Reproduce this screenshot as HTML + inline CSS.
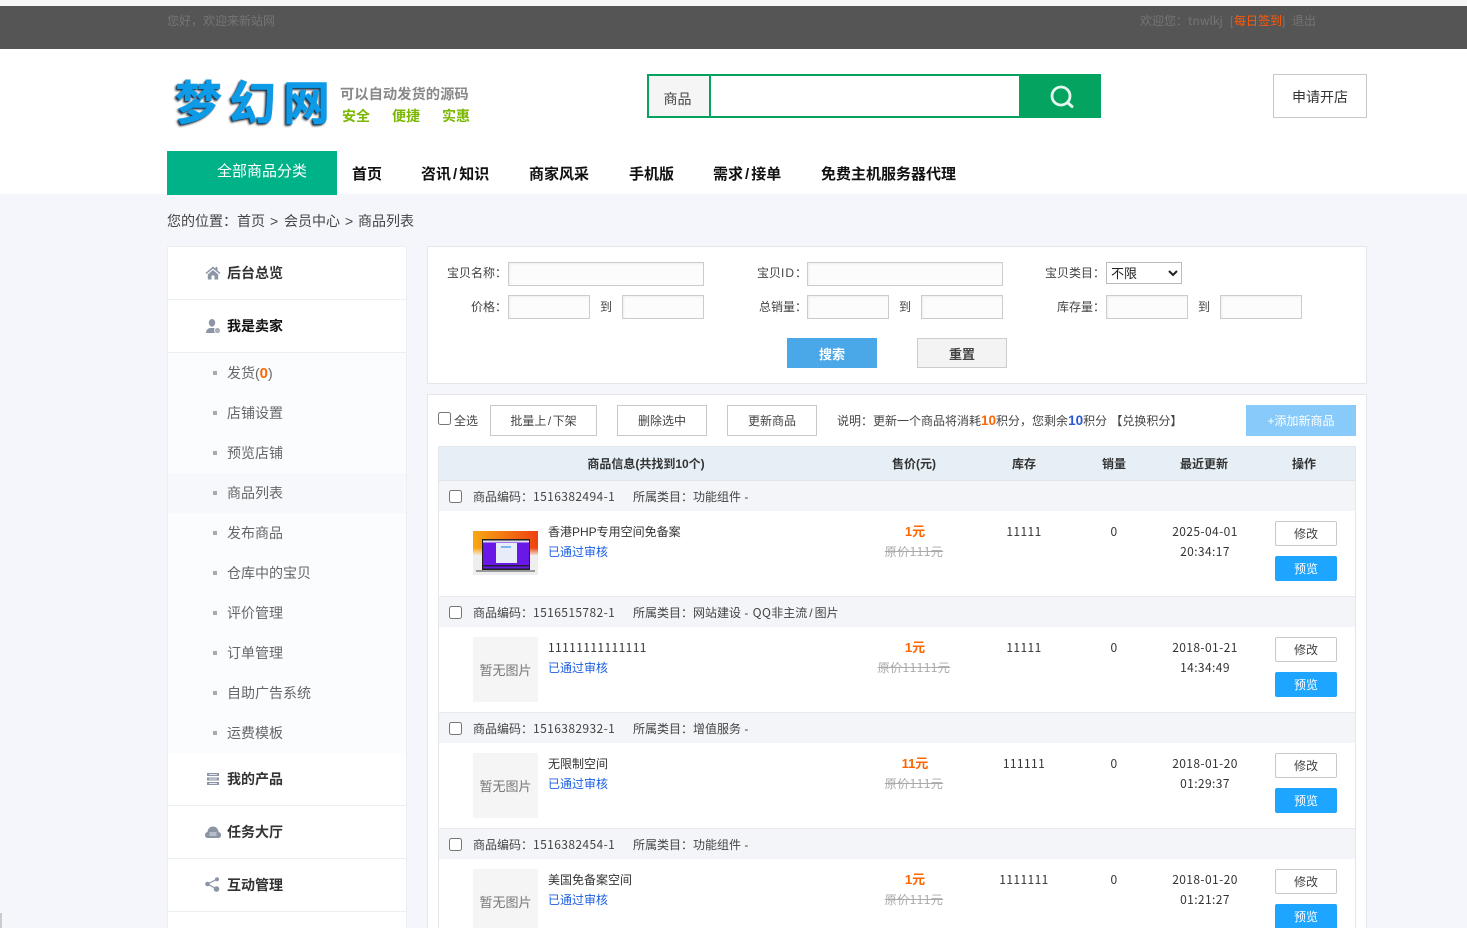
<!DOCTYPE html>
<html lang="zh-CN"><head><meta charset="utf-8"><title>商品列表</title>
<style>
*{box-sizing:border-box}
html,body{margin:0;padding:0;width:1467px;height:928px;overflow:hidden;background:#f4f6fb;font-family:"Liberation Sans","Noto Sans CJK SC",sans-serif;font-size:12px;color:#333}
#w{position:relative;width:1467px;height:928px;overflow:hidden}
.a{position:absolute}
.t{position:absolute;white-space:nowrap;line-height:20px}
.c{text-align:center}
.n{font-family:"Noto Sans CJK SC","Liberation Sans",sans-serif;letter-spacing:.4px;font-kerning:none}
.b{font-weight:bold}
.sl{margin:0 2px}
input.i{position:absolute;height:24px;border:1px solid #ccc;background:#fcfcfd;box-shadow:inset 1px 1px 2px #eee;margin:0;padding:0}
.btn{position:absolute;border:1px solid #c8c8c8;background:#fff;text-align:center;line-height:31px;height:31px;color:#444}
.side{font-size:14px;font-weight:bold;left:227px;color:#333}
.sub{font-size:14px;left:227px;color:#666}
.dot{position:absolute;left:213px;width:4px;height:4px;background:#a5a9b0}
.rh{position:absolute;left:439px;width:916px;height:30px;background:#f3f5f9}
.ln{position:absolute;left:439px;width:916px;height:2px;background:#e8eaee}
.cb{position:absolute;left:449px;width:13px;height:13px;border:1px solid #767676;border-radius:2.5px;background:#fff}
.noimg{position:absolute;left:473px;width:65px;height:65px;background:#f5f5f5;color:#777;font-size:13px;text-align:center;line-height:67px}
.mod{position:absolute;left:1275px;width:62px;height:25px;border:1px solid #c8c8c8;border-radius:2px;text-align:center;line-height:25px;background:#fff;color:#444}
.pre{position:absolute;left:1275px;width:62px;height:25px;border-radius:2px;text-align:center;line-height:27px;background:#1ea5ff;color:#fff}
.ok{color:#1c5fe0}
.pr{color:#f60;font-weight:bold;font-size:13px}
.old{color:#aaa;text-decoration:line-through}
.lb{color:#444}
</style></head><body><div id="w">

<div class="a" style="left:0;top:0;width:1467px;height:6px;background:#f6f6f6"></div>
<div class="a" style="left:0;top:6px;width:1467px;height:43px;background:#555"></div>
<div class="t" style="left:167px;top:11px;color:#757575">您好，欢迎来新站网</div>
<div class="t" style="left:1140px;top:11px;color:#757575">欢迎您：</div>
<div class="t n" style="left:1188px;top:11px;color:#757575;letter-spacing:0">tnwlkj</div>
<div class="t" style="left:1230px;top:11px;color:#757575">[</div>
<div class="t" style="left:1234px;top:11px;color:#ff5a0a">每日签到</div>
<div class="t" style="left:1282px;top:11px;color:#757575">]</div>
<div class="t" style="left:1292px;top:11px;color:#757575">退出</div>

<div class="a" style="left:0;top:49px;width:1467px;height:145px;background:#fff"></div>

<div class="t b" style="left:175px;top:100px;height:0;line-height:0;font-size:47px;letter-spacing:7px;color:#0d9ae6;-webkit-text-stroke:.5px #0d9ae6;text-shadow:-1px 1px 1px #123a60,-2px 2px 2px #333;font-family:'Noto Sans CJK SC',sans-serif">梦幻网</div>
<div class="t b" style="left:340px;top:85px;font-size:14.3px;color:#888">可以自动发货的源码</div>
<div class="t b" style="left:342px;top:106px;font-size:14px;color:#7ab800">安全</div>
<div class="t b" style="left:392px;top:106px;font-size:14px;color:#7ab800">便捷</div>
<div class="t b" style="left:442px;top:106px;font-size:14px;color:#7ab800">实惠</div>

<div class="a" style="left:647px;top:74px;width:454px;height:44px;border:2px solid #04a35f;background:#fff"></div>
<div class="a c" style="left:649px;top:76px;width:62px;height:40px;background:#f5f5f5;border-right:2px solid #04a35f;font-size:14px;line-height:46px;color:#444;padding-right:3px">商品</div>
<div class="a" style="left:1019px;top:74px;width:82px;height:44px;background:#04a35f"></div>
<svg class="a" style="left:1049px;top:84px" width="26" height="26" viewBox="0 0 26 26"><circle cx="12" cy="12" r="9" fill="none" stroke="#e6f7ef" stroke-width="2.8"/><path d="M18.500 18.500L23 22.500" stroke="#e6f7ef" stroke-width="3" stroke-linecap="round"/></svg>
<div class="a c" style="left:1273px;top:74px;width:94px;height:44px;border:1px solid #c8c8c8;font-size:14px;line-height:44px;color:#333">申请开店</div>

<div class="a" style="left:167px;top:151px;width:170px;height:44px;background:#00b288"></div>
<div class="t" style="left:217px;top:163px;font-size:15px;line-height:18px;color:#fff">全部商品分类</div>
<div class="t b" style="left:352px;top:165px;font-size:15px;color:#111">首页</div>
<div class="t b" style="left:421px;top:165px;font-size:15px;color:#111">咨讯<span class="sl">/</span>知识</div>
<div class="t b" style="left:529px;top:165px;font-size:15px;color:#111">商家风采</div>
<div class="t b" style="left:629px;top:165px;font-size:15px;color:#111">手机版</div>
<div class="t b" style="left:713px;top:165px;font-size:15px;color:#111">需求<span class="sl">/</span>接单</div>
<div class="t b" style="left:821px;top:165px;font-size:15px;color:#111">免费主机服务器代理</div>

<div class="t" style="left:167px;top:211px;font-size:14px;color:#444">您的位置：</div>
<div class="t" style="left:237px;top:211px;font-size:14px;color:#444">首页</div>
<div class="t" style="left:270px;top:211px;font-size:14px;color:#444">&gt;</div>
<div class="t" style="left:284px;top:211px;font-size:14px;color:#444">会员中心</div>
<div class="t" style="left:345px;top:211px;font-size:14px;color:#444">&gt;</div>
<div class="t" style="left:358px;top:211px;font-size:14px;color:#444">商品列表</div>

<!-- sidebar -->
<div class="a" style="left:167px;top:246px;width:240px;height:682px;background:#fff;border:1px solid #eceef2;border-bottom:0"></div>
<div class="a" style="left:168px;top:299px;width:238px;height:1px;background:#eceef2"></div>
<div class="a" style="left:168px;top:352px;width:238px;height:1px;background:#eceef2"></div>
<div class="a" style="left:168px;top:353px;width:238px;height:400px;background:#fbfcfe"></div>
<div class="a" style="left:168px;top:473px;width:238px;height:40px;background:#f6f8fb"></div>
<div class="a" style="left:168px;top:805px;width:238px;height:1px;background:#eceef2"></div>
<div class="a" style="left:168px;top:858px;width:238px;height:1px;background:#eceef2"></div>
<div class="a" style="left:168px;top:911px;width:238px;height:1px;background:#eceef2"></div>

<svg class="a" style="left:205px;top:266px" width="16" height="14" viewBox="0 0 16 14"><path d="M8 .5L.5 7l1 1L8 2.600 14.500 8l1-1-3-2.600V1h-2v1.700zM2.800 8.500V13.500H6.500V9.500H9.500V13.500H13.200V8.500L8 4z" fill="#8b95a5"/></svg>
<div class="t side" style="top:263px">后台总览</div>
<svg class="a" style="left:205px;top:319px" width="16" height="15" viewBox="0 0 16 15"><ellipse cx="7" cy="3.800" rx="3.200" ry="3.800" fill="#8b95a5"/><path d="M1 14c0-2.500 1.500-4.500 4-5h3.500c2 .5 3.500 2 4 5z" fill="#8b95a5"/><circle cx="12.500" cy="11.500" r="3" fill="#a9b0bb" stroke="#fff" stroke-width=".8"/></svg>
<div class="t side" style="top:316px;color:#111">我是卖家</div>

<div class="dot" style="top:371px"></div><div class="t sub" style="top:363px">发货(<span style="color:#f60;font-weight:bold;font-size:15px">0</span>)</div>
<div class="dot" style="top:411px"></div><div class="t sub" style="top:403px">店铺设置</div>
<div class="dot" style="top:451px"></div><div class="t sub" style="top:443px">预览店铺</div>
<div class="dot" style="top:491px"></div><div class="t sub" style="top:483px">商品列表</div>
<div class="dot" style="top:531px"></div><div class="t sub" style="top:523px">发布商品</div>
<div class="dot" style="top:571px"></div><div class="t sub" style="top:563px">仓库中的宝贝</div>
<div class="dot" style="top:611px"></div><div class="t sub" style="top:603px">评价管理</div>
<div class="dot" style="top:651px"></div><div class="t sub" style="top:643px">订单管理</div>
<div class="dot" style="top:691px"></div><div class="t sub" style="top:683px">自助广告系统</div>
<div class="dot" style="top:731px"></div><div class="t sub" style="top:723px">运费模板</div>

<svg class="a" style="left:207px;top:773px" width="12" height="12" viewBox="0 0 12 12"><path d="M0 0h12v3H0zM0 4.500h12v3H0zM0 9h12v3H0z" fill="#8b95a5"/><path d="M2 1.500h8M2 6h8M2 10.500h8" stroke="#fff" stroke-width=".7"/></svg>
<div class="t side" style="top:769px">我的产品</div>
<svg class="a" style="left:205px;top:826px" width="16" height="12" viewBox="0 0 16 12"><path d="M0 9a3 3 0 0 1 2.500-3A5.500 5.500 0 0 1 13.500 6 3 3 0 0 1 16 9v.5A2.500 2.500 0 0 1 13.500 12h-11A2.500 2.500 0 0 1 0 9.500z" fill="#8b95a5"/><path d="M4.500 7h7M4.500 9h7" stroke="#fff" stroke-width=".8"/></svg>
<div class="t side" style="top:822px">任务大厅</div>
<svg class="a" style="left:205px;top:877px" width="15" height="15" viewBox="0 0 15 15"><circle cx="2.500" cy="7" r="2.300" fill="#8b95a5"/><circle cx="12" cy="2.300" r="2" fill="#8b95a5"/><circle cx="11.500" cy="12" r="2.800" fill="#8b95a5"/><path d="M2.500 7L12 2.300M2.500 7L11.500 12" stroke="#8b95a5" stroke-width="1.200"/></svg>
<div class="t side" style="top:875px">互动管理</div>

<!-- filter panel -->
<div class="a" style="left:427px;top:246px;width:940px;height:138px;background:#fff;border:1px solid #e4e6ea"></div>
<div class="t lb" style="right:960px;top:263px">宝贝名称：</div>
<input class="i" style="left:508px;top:262px;width:196px">
<div class="t lb" style="right:960px;top:297px">价格：</div>
<input class="i" style="left:508px;top:295px;width:82px"><div class="t lb" style="left:600px;top:297px">到</div><input class="i" style="left:622px;top:295px;width:82px">
<div class="t lb" style="right:660px;top:263px">宝贝<span style="letter-spacing:1px">ID</span>：</div>
<input class="i" style="left:807px;top:262px;width:196px">
<div class="t lb" style="right:660px;top:297px">总销量：</div>
<input class="i" style="left:807px;top:295px;width:82px"><div class="t lb" style="left:899px;top:297px">到</div><input class="i" style="left:921px;top:295px;width:82px">
<div class="t lb" style="right:362px;top:263px">宝贝类目：</div>
<select class="a" style="left:1106px;top:262px;width:76px;height:22px;font-size:13px;font-family:inherit;margin:0;padding:0;background:#fff;border:1px solid #bbb;color:#222"><option>不限</option></select>
<div class="t lb" style="right:362px;top:297px">库存量：</div>
<input class="i" style="left:1106px;top:295px;width:82px"><div class="t lb" style="left:1198px;top:297px">到</div><input class="i" style="left:1220px;top:295px;width:82px">
<div class="a c b" style="left:787px;top:338px;width:90px;height:30px;background:#4aa8e8;color:#fff;font-size:13px;line-height:33px">搜索</div>
<div class="a c b" style="left:917px;top:338px;width:90px;height:30px;background:#f3f3f3;border:1px solid #ccc;color:#444;font-size:13px;line-height:31px">重置</div>

<!-- list panel -->
<div class="a" style="left:427px;top:394px;width:940px;height:534px;background:#fff;border:1px solid #e4e6ea;border-bottom:0"></div>
<input type="checkbox" class="a" style="left:438px;top:412px;margin:0;width:13px;height:13px">
<div class="t lb" style="left:454px;top:411px">全选</div>
<div class="btn" style="left:490px;top:405px;width:107px">批量上<span style="margin:0 1.500px">/</span>下架</div>
<div class="btn" style="left:617px;top:405px;width:90px">删除选中</div>
<div class="btn" style="left:727px;top:405px;width:90px">更新商品</div>
<div class="t lb" style="left:837px;top:411px">说明：更新一个商品将消耗<span style="color:#f60;font-weight:bold;font-size:13.500px">10</span>积分，您剩余<span style="color:#2a56d8;font-weight:bold;font-size:13.500px">10</span>积分 【兑换积分】</div>
<div class="a c" style="left:1246px;top:405px;width:110px;height:31px;background:#88cbfb;color:#fff;line-height:32px;font-size:12px">+添加新商品</div>

<!-- table -->
<div class="a" style="left:438px;top:446px;width:918px;height:482px;border:1px solid #e3e6ea;border-bottom:0;background:#fff"></div>
<div class="a" style="left:439px;top:447px;width:916px;height:33px;background:#e6eff5"></div>
<div class="a" style="left:439px;top:480px;width:916px;height:1px;background:#e0e3e8"></div>
<div class="t c b" style="left:546px;top:454px;width:200px;color:#333">商品信息(共找到10个)</div>
<div class="t c b" style="left:864px;top:454px;width:100px;color:#333">售价(元)</div>
<div class="t c b" style="left:974px;top:454px;width:100px;color:#333">库存</div>
<div class="t c b" style="left:1064px;top:454px;width:100px;color:#333">销量</div>
<div class="t c b" style="left:1154px;top:454px;width:100px;color:#333">最近更新</div>
<div class="t c b" style="left:1254px;top:454px;width:100px;color:#333">操作</div>

<!-- row 1 -->
<div class="rh" style="top:481px"></div><div class="cb" style="top:490px"></div>
<div class="t lb" style="left:473px;top:487px">商品编码：<span class="n">1516382494-1</span></div>
<div class="t lb" style="left:633px;top:487px">所属类目：功能组件 -</div>
<svg class="a" style="left:473px;top:531px" width="65" height="44" viewBox="0 0 65 44"><defs><linearGradient id="g" x1="0" y1="0" x2="1" y2="0"><stop offset="0" stop-color="#f8a814"/><stop offset="1" stop-color="#ee4210"/></linearGradient><linearGradient id="h" x1="0" y1="0" x2="0" y2="1"><stop offset="0" stop-color="#fff" stop-opacity="0"/><stop offset="1" stop-color="#eee"/></linearGradient></defs><rect width="65" height="44" fill="#eee"/><rect width="65" height="24" fill="url(#g)"/><rect y="17" width="65" height="8" fill="url(#h)"/><rect x="9" y="8" width="48" height="31" fill="#222"/><rect x="10" y="9.500" width="46" height="28" fill="#6a18e8"/><rect x="10" y="9.500" width="46" height="2" fill="#dde"/><rect x="23" y="12" width="21" height="20" fill="#e8ecf8"/><rect x="28" y="15" width="10" height="2" fill="#7fb2f0"/><rect x="10" y="34" width="46" height="1.500" fill="#223"/><rect x="3" y="39" width="59" height="2" fill="#999"/></svg>
<div class="t" style="left:548px;top:522px;color:#333">香港PHP专用空间免备案</div>
<div class="t ok" style="left:548px;top:542px">已通过审核</div>
<div class="t c pr" style="left:865px;top:522px;width:100px">1元</div>
<div class="t c old n" style="left:864px;top:542px;width:100px">原价111元</div>
<div class="t c n" style="left:974px;top:522px;width:100px">11111</div>
<div class="t c n" style="left:1064px;top:522px;width:100px">0</div>
<div class="t c n" style="left:1155px;top:522px;width:100px">2025-04-01</div>
<div class="t c n" style="left:1155px;top:542px;width:100px">20:34:17</div>
<div class="mod" style="top:521px">修改</div><div class="pre" style="top:556px">预览</div>
<div class="ln" style="top:596px"></div>

<!-- row 2 -->
<div class="rh" style="top:597px"></div><div class="cb" style="top:606px"></div>
<div class="t lb" style="left:473px;top:603px">商品编码：<span class="n">1516515782-1</span></div>
<div class="t lb" style="left:633px;top:603px">所属类目：网站建设 - <span class="n" style="margin-left:1px">QQ</span>非主流<span style="margin:0 2px">/</span>图片</div>
<div class="noimg" style="top:637px">暂无图片</div>
<div class="t n" style="left:548px;top:638px;color:#333">11111111111111</div>
<div class="t ok" style="left:548px;top:658px">已通过审核</div>
<div class="t c pr" style="left:865px;top:638px;width:100px">1元</div>
<div class="t c old n" style="left:864px;top:658px;width:100px">原价11111元</div>
<div class="t c n" style="left:974px;top:638px;width:100px">11111</div>
<div class="t c n" style="left:1064px;top:638px;width:100px">0</div>
<div class="t c n" style="left:1155px;top:638px;width:100px">2018-01-21</div>
<div class="t c n" style="left:1155px;top:658px;width:100px">14:34:49</div>
<div class="mod" style="top:637px">修改</div><div class="pre" style="top:672px">预览</div>
<div class="ln" style="top:712px"></div>

<!-- row 3 -->
<div class="rh" style="top:713px"></div><div class="cb" style="top:722px"></div>
<div class="t lb" style="left:473px;top:719px">商品编码：<span class="n">1516382932-1</span></div>
<div class="t lb" style="left:633px;top:719px">所属类目：增值服务 -</div>
<div class="noimg" style="top:753px">暂无图片</div>
<div class="t" style="left:548px;top:754px;color:#333">无限制空间</div>
<div class="t ok" style="left:548px;top:774px">已通过审核</div>
<div class="t c pr" style="left:865px;top:754px;width:100px">11元</div>
<div class="t c old n" style="left:864px;top:774px;width:100px">原价111元</div>
<div class="t c n" style="left:974px;top:754px;width:100px">111111</div>
<div class="t c n" style="left:1064px;top:754px;width:100px">0</div>
<div class="t c n" style="left:1155px;top:754px;width:100px">2018-01-20</div>
<div class="t c n" style="left:1155px;top:774px;width:100px">01:29:37</div>
<div class="mod" style="top:753px">修改</div><div class="pre" style="top:788px">预览</div>
<div class="ln" style="top:828px"></div>

<!-- row 4 -->
<div class="rh" style="top:829px"></div><div class="cb" style="top:838px"></div>
<div class="t lb" style="left:473px;top:835px">商品编码：<span class="n">1516382454-1</span></div>
<div class="t lb" style="left:633px;top:835px">所属类目：功能组件 -</div>
<div class="noimg" style="top:869px;height:59px">暂无图片</div>
<div class="t" style="left:548px;top:870px;color:#333">美国免备案空间</div>
<div class="t ok" style="left:548px;top:890px">已通过审核</div>
<div class="t c pr" style="left:865px;top:870px;width:100px">1元</div>
<div class="t c old n" style="left:864px;top:890px;width:100px">原价111元</div>
<div class="t c n" style="left:974px;top:870px;width:100px">1111111</div>
<div class="t c n" style="left:1064px;top:870px;width:100px">0</div>
<div class="t c n" style="left:1155px;top:870px;width:100px">2018-01-20</div>
<div class="t c n" style="left:1155px;top:890px;width:100px">01:21:27</div>
<div class="mod" style="top:869px">修改</div><div class="pre" style="top:904px;height:24px;border-radius:2px 2px 0 0">预览</div>

<div class="a" style="left:0;top:913px;width:2px;height:15px;background:#ccc"></div>
</div></body></html>
